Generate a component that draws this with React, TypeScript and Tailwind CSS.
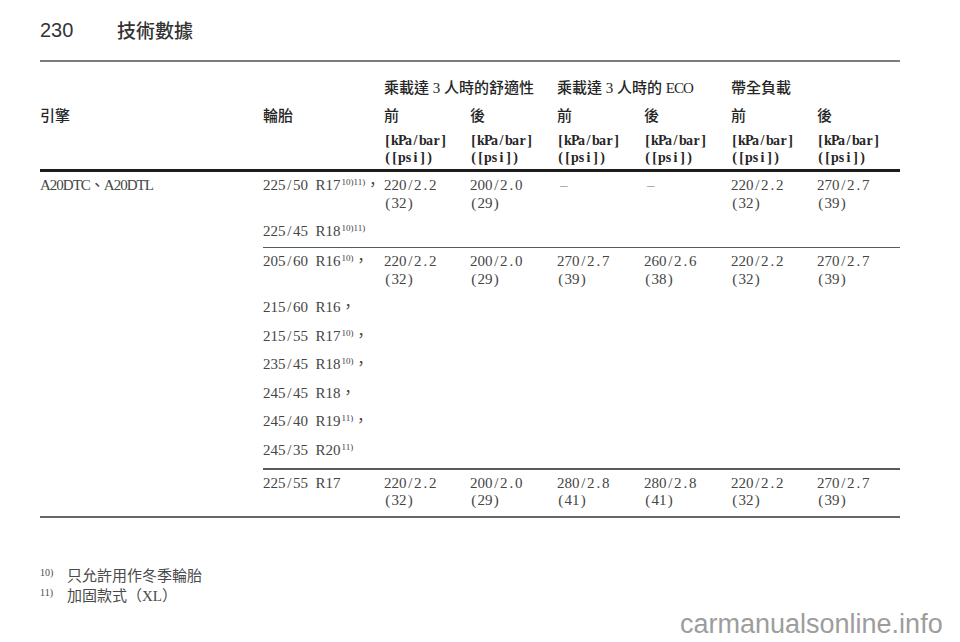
import React from "react";

const M = ({ t }: { t: string }) => (
  <>
    {t.split("").map((ch, i) =>
      /[A-Za-z]/.test(ch) || ch.charCodeAt(0) > 0x2000 ? (
        <span key={i}>{ch}</span>
      ) : (
        <span key={i} className="inline-block w-[7.5px] text-center">
          {ch === " " ? "\u00a0" : ch}
        </span>
      )
    )}
  </>
);

const U = ({ t }: { t: string }) => (
  <>
    {t.split("").map((ch, i) => (
      <span key={i} className="inline-block w-[7px] text-center">
        {ch}
      </span>
    ))}
  </>
);

const Sup = ({ t }: { t: string }) => (
  <span className="relative top-[-5px] text-[9px] leading-none ml-[1px]">{t}</span>
);

type Row = { tire: React.ReactNode; vals?: (string[] | null)[] };

const Val = ({ v }: { v: string[] | null }) =>
  v === null ? (
    <div className="pl-[3px] text-[#9a9a9a]">–</div>
  ) : (
    <div>
      <div>
        <M t={v[0]} />
      </div>
      <div>
        <M t={v[1]} />
      </div>
    </div>
  );

const Group = ({ rows, pb }: { rows: Row[]; pb: string }) => (
  <div className={`flex flex-col gap-[11px] pt-[5px] ${pb}`}>
    {rows.map((r, i) => (
      <div
        key={i}
        className="grid grid-cols-[121px_86px_87px_87px_87px_86px_83px] items-start leading-[17.5px]"
      >
        <div className="whitespace-nowrap">{r.tire}</div>
        {r.vals ? r.vals.map((v, j) => <Val key={j} v={v} />) : null}
      </div>
    ))}
  </div>
);

const G1: Row[] = [
  {
    tire: (
      <>
        <M t="225/50 R17" />
        <Sup t="10)11)" />
        <span>，</span>
      </>
    ),
    vals: [["220/2.2", "(32)"], ["200/2.0", "(29)"], null, null, ["220/2.2", "(32)"], ["270/2.7", "(39)"]],
  },
  {
    tire: (
      <>
        <M t="225/45 R18" />
        <Sup t="10)11)" />
      </>
    ),
  },
];

const G2: Row[] = [
  {
    tire: (
      <>
        <M t="205/60 R16" />
        <Sup t="10)" />
        <span>，</span>
      </>
    ),
    vals: [
      ["220/2.2", "(32)"],
      ["200/2.0", "(29)"],
      ["270/2.7", "(39)"],
      ["260/2.6", "(38)"],
      ["220/2.2", "(32)"],
      ["270/2.7", "(39)"],
    ],
  },
  { tire: (<><M t="215/60 R16" /><span>，</span></>) },
  { tire: (<><M t="215/55 R17" /><Sup t="10)" /><span>，</span></>) },
  { tire: (<><M t="235/45 R18" /><Sup t="10)" /><span>，</span></>) },
  { tire: (<><M t="245/45 R18" /><span>，</span></>) },
  { tire: (<><M t="245/40 R19" /><Sup t="11)" /><span>，</span></>) },
  { tire: (<><M t="245/35 R20" /><Sup t="11)" /></>) },
];

const G3: Row[] = [
  {
    tire: <M t="225/55 R17" />,
    vals: [
      ["220/2.2", "(32)"],
      ["200/2.0", "(29)"],
      ["280/2.8", "(41)"],
      ["280/2.8", "(41)"],
      ["220/2.2", "(32)"],
      ["270/2.7", "(39)"],
    ],
  },
];

export default function App() {
  return (
    <div className="relative w-[960px] h-[642px] bg-white overflow-hidden font-['Liberation_Serif','Noto_Sans_CJK_TC',serif] text-[15px] text-[#454545]">
      <div className="ml-[40px] w-[860px]">
        {/* title */}
        <div className="flex items-center h-[60px] text-[#333]">
          <span className="w-[77px] font-['Liberation_Sans',sans-serif] text-[20px]">230</span>
          <span className="font-['Noto_Sans_CJK_TC',sans-serif] text-[19px] font-medium">技術數據</span>
        </div>
        <div className="h-[2px] bg-[#7c7c7c]" />

        {/* header */}
        <div className="pt-[16px] pb-[3.5px] text-[#262626]">
          <div className="grid grid-cols-[223px_121px_86px_87px_87px_87px_86px_83px] h-[20px] leading-[20px] font-medium">
            <div />
            <div />
            <div className="col-span-2 whitespace-nowrap">乘載達 3 人時的舒適性</div>
            <div className="col-span-2 whitespace-nowrap">
              乘載達 3 人時的 <span className="tracking-[-1px]">ECO</span>
            </div>
            <div className="col-span-2 whitespace-nowrap">帶全負載</div>
          </div>
          <div className="grid grid-cols-[223px_121px_86px_87px_87px_87px_86px_83px] h-[20px] leading-[20px] mt-[8px] font-medium">
            <div>引擎</div>
            <div>輪胎</div>
            <div>前</div>
            <div>後</div>
            <div>前</div>
            <div>後</div>
            <div>前</div>
            <div>後</div>
          </div>
          <div className="grid grid-cols-[223px_121px_86px_87px_87px_87px_86px_83px] mt-[5.5px] leading-[17px] text-[14px] font-bold">
            <div />
            <div />
            {[0, 1, 2, 3, 4, 5].map((i) => (
              <div key={i}>
                <div>
                  <U t="[kPa/bar]" />
                </div>
                <div>
                  <U t="([psi])" />
                </div>
              </div>
            ))}
          </div>
        </div>
        <div className="h-[3px] bg-[#1c1c1c]" />

        {/* body */}
        <div className="flex">
          <div className="w-[223px] pt-[5px] leading-[17.5px] whitespace-nowrap tracking-[-1px]">
            A20DTC、A20DTL
          </div>
          <div className="w-[637px]">
            <Group rows={G1} pb="pb-[6px]" />
            <div className="h-[1.5px] bg-[#5a5a5a]" />
            <Group rows={G2} pb="pb-[9px]" />
            <div className="h-[1.5px] bg-[#5a5a5a]" />
            <Group rows={G3} pb="pb-[6px]" />
          </div>
        </div>
        <div className="h-[2px] bg-[#666]" />

        {/* footnotes */}
        <div className="mt-[48px] leading-[20px] text-[#4a4a4a]">
          <div className="flex">
            <span className="w-[27px] text-[10px] relative top-[-3px]">10)</span>
            <span>只允許用作冬季輪胎</span>
          </div>
          <div className="flex">
            <span className="w-[27px] text-[10px] relative top-[-3px]">11)</span>
            <span>加固款式（XL）</span>
          </div>
        </div>
      </div>

      <div className="absolute left-[680px] top-[609px] font-['Liberation_Sans',sans-serif] text-[27px] leading-[30px] text-[#9d9d9d]">
        carmanualsonline.info
      </div>
    </div>
  );
}
